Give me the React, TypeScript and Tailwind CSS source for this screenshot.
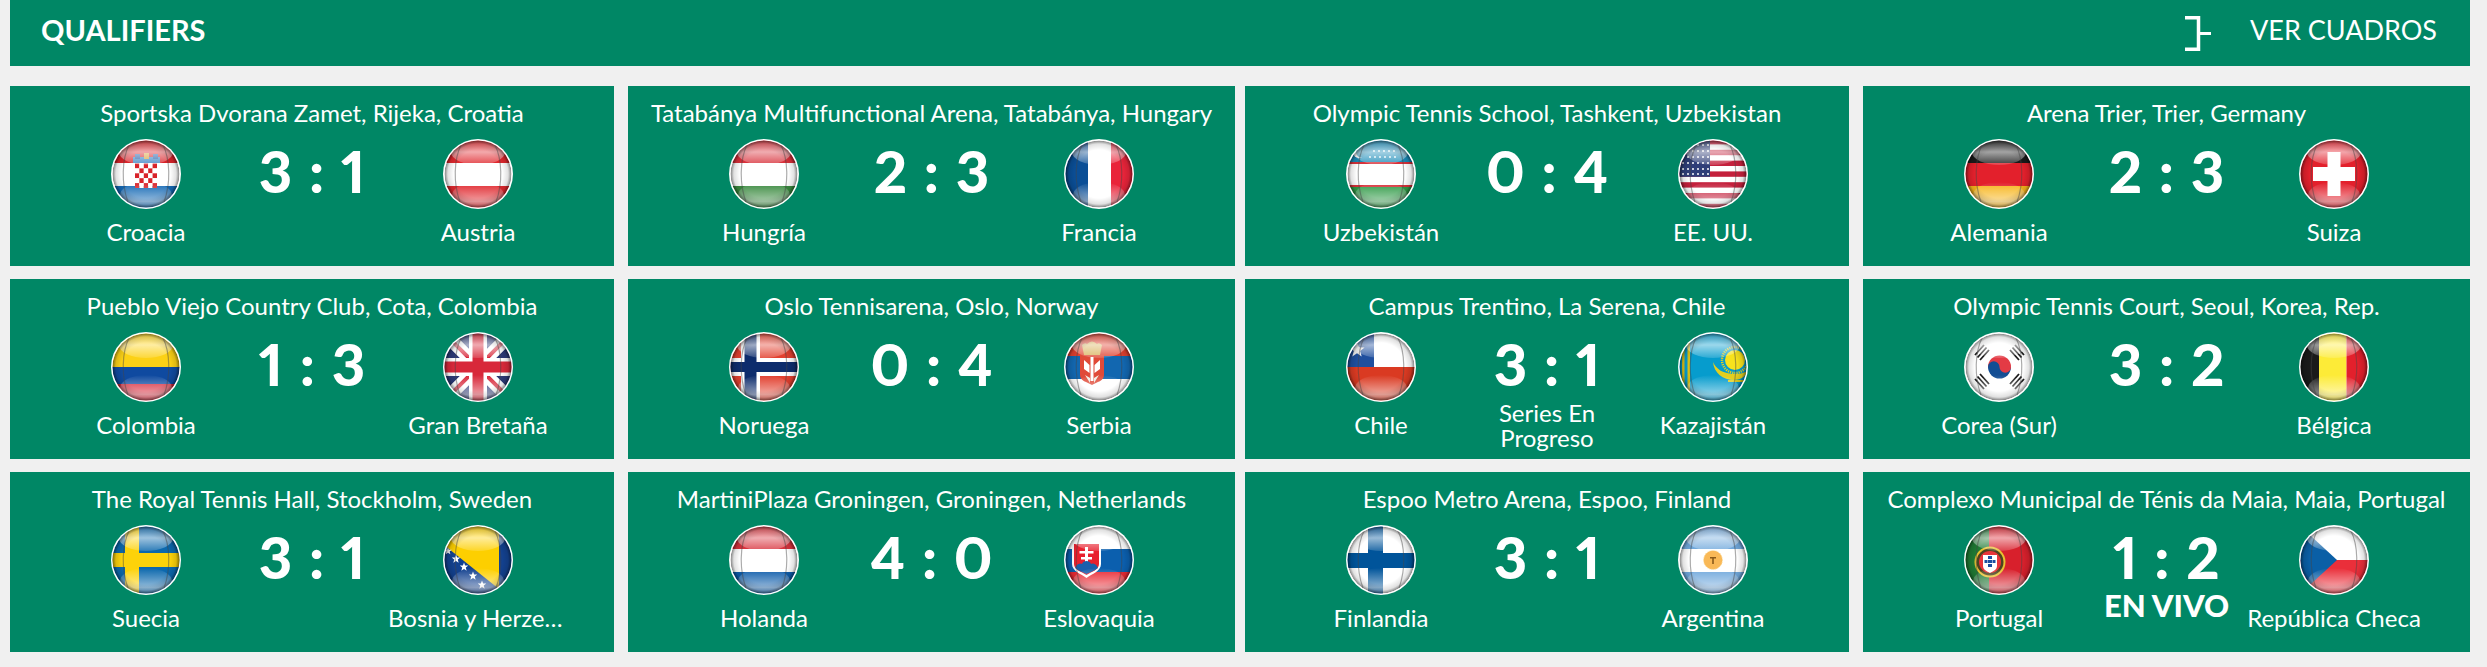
import React from "react";

const R = (x: number, y: number, w: number, h: number, c: string) => <rect x={x} y={y} width={w} height={h} fill={c} />;

function Stars({ pts, r = 1.1, c = "#fff" }: { pts: [number, number][]; r?: number; c?: string }) {
  return <>{pts.map(([x, y], i) => <circle key={i} cx={x} cy={y} r={r} fill={c} />)}</>;
}

function Star5({ x, y, s, c = "#fff" }: { x: number; y: number; s: number; c?: string }) {
  const p: string[] = [];
  for (let i = 0; i < 10; i++) {
    const a = -Math.PI / 2 + (i * Math.PI) / 5;
    const r = i % 2 === 0 ? s : s * 0.42;
    p.push(`${x + r * Math.cos(a)},${y + r * Math.sin(a)}`);
  }
  return <polygon points={p.join(" ")} fill={c} />;
}

const tri = (a: string, b: string, c: string) => (
  <>
    {R(0, 0, 70, 24, a)}
    {R(0, 24, 70, 23, b)}
    {R(0, 47, 70, 23, c)}
  </>
);
const vtri = (a: string, b: string, c: string, p = 24, q = 47) => (
  <>
    {R(0, 0, p, 70, a)}
    {R(p, 0, q - p, 70, b)}
    {R(q, 0, 70 - q, 70, c)}
  </>
);

const checker = () => {
  const cells = [];
  for (let r = 0; r < 5; r++) for (let c = 0; c < 5; c++) {
    cells.push(<rect key={`${r}-${c}`} x={24 + c * 4.4} y={24.5 + r * 4.9} width={4.4} height={4.9} fill={(r + c) % 2 === 0 ? "#d8232a" : "#fff"} />);
  }
  return cells;
};

const FLAGS: Record<string, React.ReactNode> = {
  hr: (
    <>
      {tri("#d8232a", "#ffffff", "#1368b4")}
      {R(22, 18, 27, 6, "#3f86c6")}
      {R(24, 15, 5, 5, "#2a5fa8")}
      {R(33, 14, 5, 6, "#d8a23a")}
      {R(42, 15, 5, 5, "#2a5fa8")}
      {checker()}
    </>
  ),
  at: tri("#e0282e", "#ffffff", "#e0282e"),
  hu: tri("#d8303a", "#ffffff", "#3a8a3f"),
  fr: vtri("#0a4e96", "#ffffff", "#e9243a"),
  uz: (
    <>
      {R(0, 0, 70, 23, "#1a8bb8")}
      {R(0, 23, 70, 2, "#d6313a")}
      {R(0, 25, 70, 21, "#fff")}
      {R(0, 46, 70, 2, "#d6313a")}
      {R(0, 48, 70, 22, "#2f9a46")}
      <circle cx={13} cy={13} r={6} fill="#fff" />
      <circle cx={15.5} cy={13} r={5.5} fill="#1a8bb8" />
      <Stars r={0.9} pts={[[28, 12], [33, 12], [38, 12], [43, 12], [48, 12], [24, 18], [29, 18], [34, 18], [39, 18], [44, 18], [49, 18]]} />
    </>
  ),
  us: (
    <>
      {R(0, 0, 70, 70, "#fff")}
      {[0, 2, 4, 6, 8, 10, 12].map((i) => <rect key={i} x={0} y={i * 5.4} width={70} height={5.4} fill="#c4203c" />)}
      {R(0, 0, 32, 37.8, "#2f3e78")}
      <Stars r={1} pts={[5, 10, 15, 20, 25, 30].flatMap((x) => [6, 12, 18, 24, 30, 35].map((y) => [x, y] as [number, number]))} />
    </>
  ),
  de: tri("#1a1a1a", "#e3202c", "#f7b51c"),
  ch: (
    <>
      {R(0, 0, 70, 70, "#e3202c")}
      {R(14, 28, 42, 14, "#fff")}
      {R(28.5, 13, 13, 44, "#fff")}
    </>
  ),
  co: (
    <>
      {R(0, 0, 70, 35, "#fcd116")}
      {R(0, 35, 70, 17, "#0f4aa0")}
      {R(0, 52, 70, 18, "#d8283a")}
    </>
  ),
  gb: (
    <>
      {R(0, 0, 70, 70, "#2c3a78")}
      <path d="M0 0L70 70M70 0L0 70" stroke="#fff" strokeWidth={13} />
      <path d="M0 0L70 70M70 0L0 70" stroke="#d8283a" strokeWidth={4} />
      {R(26, 0, 18, 70, "#fff")}
      {R(0, 26, 70, 18, "#fff")}
      {R(29.5, 0, 11, 70, "#d8283a")}
      {R(0, 29.5, 70, 11, "#d8283a")}
    </>
  ),
  no: (
    <>
      {R(0, 0, 70, 70, "#e2402f")}
      {R(12, 0, 19, 70, "#fff")}
      {R(0, 26, 70, 18, "#fff")}
      {R(15.5, 0, 12, 70, "#0d2c6c")}
      {R(0, 30, 70, 10, "#0d2c6c")}
    </>
  ),
  rs: (
    <>
      {tri("#e0402f", "#1267b0", "#ffffff")}
      <path d="M18 13q3-3 5-1 5-5 10 0 2-2 5 1l-2 10H20z" fill="#d9b25c" />
      <path d="M16 23h24v20c0 6-7 7-12 10-5-3-12-4-12-10z" fill="#e04a38" />
      <path d="M26.500 25h3v24h-3zM20 28l5.500 5v8l-5.500-4zM36 28l-5.500 5v8l5.500-4z" fill="#fff" />
      <path d="M21 43l5 3v5zM35 43l-5 3v5z" fill="#f1efe6" />
    </>
  ),
  cl: (
    <>
      {R(0, 0, 70, 35, "#fff")}
      {R(0, 35, 70, 35, "#da3a22")}
      {R(0, 0, 28, 35, "#1f4f9e")}
      <Star5 x={11} y={18} s={8} c="#f2f2f2" />
    </>
  ),
  kz: (
    <>
      {R(0, 0, 70, 70, "#069ccd")}
      {R(4, 10, 8, 50, "#d8c21a")}
      {R(6.500, 10, 3, 50, "#069ccd")}
      <circle cx={57} cy={28} r={10} fill="#f7e21c" />
      <circle cx={57} cy={28} r={13} fill="none" stroke="#e4cf1e" strokeWidth={2.5} strokeDasharray="1.2 1" />
      <path d="M35 30c3 7 10 12 22 12 5 0 9-1 13-3-3 6-8 9-14 9-11 0-20-7-21-18z" fill="#e4cf1e" />
      {R(50, 48, 16, 2, "#e4cf1e")}
    </>
  ),
  kr: (
    <>
      {R(0, 0, 70, 70, "#fff")}
      <path d="M24 35a11.500 11.500 0 0 1 23 0z" fill="#e33b45" />
      <path d="M24 35a11.500 11.500 0 0 0 23 0z" fill="#134e94" />
      <path d="M24 35a5.750 5.750 0 0 1 11.500 0z" fill="#134e94" />
      <path d="M35.500 35a5.750 5.750 0 0 0 11.500 0z" fill="#e33b45" />
      <g stroke="#1c1c1c" strokeWidth={1.800}>
        <path d="M11 23l9-10M13.500 25.500l9-10M16 28l9-10" />
        <path d="M46 18l9 10M48.500 15.500l9 10M51 13l9 10" />
        <path d="M11 47l9 10M13.500 44.500l9 10M16 42l9 10" />
        <path d="M46 52l9-10M48.500 54.500l9-10M51 57l9-10" />
      </g>
    </>
  ),
  be: vtri("#1a1a1a", "#fdeb37", "#e3202c", 20, 47.5),
  se: (
    <>
      {R(0, 0, 70, 70, "#0c68ad")}
      {R(14, 0, 14, 70, "#fdd20a")}
      {R(0, 28, 70, 14, "#fdd20a")}
    </>
  ),
  ba: (
    <>
      {R(0, 0, 70, 70, "#13418f")}
      <polygon points="-24,0 56,0 56,64" fill="#fdcf00" />
      <Star5 x={5} y={26} s={4} />
      <Star5 x={13} y={34} s={4.500} />
      <Star5 x={21} y={42} s={4.500} />
      <Star5 x={30} y={51} s={4.500} />
      <Star5 x={39} y={60} s={4.500} />
    </>
  ),
  nl: tri("#d8323c", "#ffffff", "#0d5caa"),
  sk: (
    <>
      {tri("#ffffff", "#0b5fae", "#ea2a34")}
      <path d="M8 17h29v22c0 7-9 10-14.500 14C17 49 8 46 8 39z" fill="#fff" />
      <path d="M10 19h25v20c0 6-8 8-12.500 11C18 47 10 45 10 39z" fill="#e8202e" />
      <path d="M21 22h3v18h-3zM15.500 26h14v2.500h-14zM17 32h11v2.500H17z" fill="#fff" />
      <path d="M11 43c2-5 6-5 7-4 1-4 8-4 9 0 1-1 5-1 7 4-4 3-8 4-11.500 6-3.500-2-7.500-3-11.500-6z" fill="#1a5fac" />
    </>
  ),
  fi: (
    <>
      {R(0, 0, 70, 70, "#fff")}
      {R(22, 0, 15, 70, "#00549a")}
      {R(0, 28, 70, 15, "#00549a")}
    </>
  ),
  ar: (
    <>
      {tri("#70a8dc", "#ffffff", "#70a8dc")}
      <circle cx={35} cy={35} r={9.500} fill="#f9b957" />
      <circle cx={35} cy={35} r={9.500} fill="none" stroke="#fbe0a8" strokeWidth={1} strokeDasharray="1 1" />
      <path d="M32 32h6v1.500h-2.200V39h-1.600v-5.500H32z" fill="#8a5a1a" />
    </>
  ),
  pt: (
    <>
      {R(0, 0, 25, 70, "#1f7a34")}
      {R(25, 0, 45, 70, "#d8202c")}
      <circle cx={26} cy={37} r={15.500} fill="#e8c030" />
      <circle cx={26} cy={37} r={13.500} fill="#1a1a1a" fillOpacity={0.75} />
      <circle cx={26} cy={37} r={11} fill="#e8343a" />
      <path d="M19 30h14v11c0 4-4 5-7 7-3-2-7-3-7-7z" fill="#fff" />
      {R(24, 31, 4, 3, "#1a4fa0")}
      {R(20.500, 35, 3, 3, "#1a4fa0")}
      {R(24, 35, 4, 3, "#1a4fa0")}
      {R(28.500, 35, 3, 3, "#1a4fa0")}
      {R(24, 39, 4, 3, "#1a4fa0")}
    </>
  ),
  cz: (
    <>
      {R(0, 0, 70, 35, "#ffffff")}
      {R(0, 35, 70, 35, "#ea2f3a")}
      <polygon points="0,0 38,35 0,70" fill="#0a5fa6" />
    </>
  ),
};

function Flag({ code }: { code: string }) {
  const clip = `clip-${code}`;
  return (
    <svg viewBox="0 0 70 70" className="w-[70px] h-[70px] block">
      <defs>
        <clipPath id={clip}><circle cx={35} cy={35} r={33.500} /></clipPath>
        <radialGradient id={`rim-${code}`} cx="50%" cy="50%" r="50%">
          <stop offset="0.72" stopColor="#000" stopOpacity={0} />
          <stop offset="0.9" stopColor="#000" stopOpacity={0.12} />
          <stop offset="1" stopColor="#000" stopOpacity={0.5} />
        </radialGradient>
        <linearGradient id={`top-${code}`} x1="0" y1="0" x2="0" y2="1">
          <stop offset="0" stopColor="#fff" stopOpacity={0.1} />
          <stop offset="0.5" stopColor="#fff" stopOpacity={0.6} />
          <stop offset="1" stopColor="#fff" stopOpacity={0.15} />
        </linearGradient>
        <linearGradient id={`bot-${code}`} x1="0" y1="0" x2="0" y2="1">
          <stop offset="0" stopColor="#fff" stopOpacity={0} />
          <stop offset="0.75" stopColor="#fff" stopOpacity={0.55} />
          <stop offset="1" stopColor="#fff" stopOpacity={0.25} />
        </linearGradient>
      </defs>
      <circle cx={35} cy={35} r={35} fill="#fff" />
      <g clipPath={`url(#${clip})`}>
        {FLAGS[code]}
        <ellipse cx={35} cy={13} rx={27} ry={13} fill={`url(#top-${code})`} />
        <ellipse cx={35} cy={56} rx={26} ry={13} fill={`url(#bot-${code})`} />
        <circle cx={35} cy={35} r={33.500} fill={`url(#rim-${code})`} />
        <path d="M18 6C11 20 10 44 17 63M52 6C59 20 60 44 53 63" fill="none" stroke="#444" strokeOpacity={0.45} strokeWidth={1.200} />
      </g>
    </svg>
  );
}

type Match = { venue: string; a: string; af: string; b: string; bf: string; score: [number, number]; status?: string; live?: boolean };

const MATCHES: Match[] = [
  { venue: "Sportska Dvorana Zamet, Rijeka, Croatia", a: "Croacia", af: "hr", b: "Austria", bf: "at", score: [3, 1] },
  { venue: "Tatabánya Multifunctional Arena, Tatabánya, Hungary", a: "Hungría", af: "hu", b: "Francia", bf: "fr", score: [2, 3] },
  { venue: "Olympic Tennis School, Tashkent, Uzbekistan", a: "Uzbekistán", af: "uz", b: "EE. UU.", bf: "us", score: [0, 4] },
  { venue: "Arena Trier, Trier, Germany", a: "Alemania", af: "de", b: "Suiza", bf: "ch", score: [2, 3] },
  { venue: "Pueblo Viejo Country Club, Cota, Colombia", a: "Colombia", af: "co", b: "Gran Bretaña", bf: "gb", score: [1, 3] },
  { venue: "Oslo Tennisarena, Oslo, Norway", a: "Noruega", af: "no", b: "Serbia", bf: "rs", score: [0, 4] },
  { venue: "Campus Trentino, La Serena, Chile", a: "Chile", af: "cl", b: "Kazajistán", bf: "kz", score: [3, 1], status: "Series En Progreso" },
  { venue: "Olympic Tennis Court, Seoul, Korea, Rep.", a: "Corea (Sur)", af: "kr", b: "Bélgica", bf: "be", score: [3, 2] },
  { venue: "The Royal Tennis Hall, Stockholm, Sweden", a: "Suecia", af: "se", b: "Bosnia y Herzegovina", bf: "ba", score: [3, 1] },
  { venue: "MartiniPlaza Groningen, Groningen, Netherlands", a: "Holanda", af: "nl", b: "Eslovaquia", bf: "sk", score: [4, 0] },
  { venue: "Espoo Metro Arena, Espoo, Finland", a: "Finlandia", af: "fi", b: "Argentina", bf: "ar", score: [3, 1] },
  { venue: "Complexo Municipal de Ténis da Maia, Maia, Portugal", a: "Portugal", af: "pt", b: "República Checa", bf: "cz", score: [1, 2], live: true },
];

function Team({ name, flag }: { name: string; flag: string }) {
  return (
    <div className="flex flex-col items-center min-w-0">
      <Flag code={flag} />
      <div className="w-full mt-[9px] h-[28px] leading-[28px] text-center truncate">{name}</div>
    </div>
  );
}

function Card({ m, wide }: { m: Match; wide: boolean }) {
  return (
    <div className={`h-[180px] bg-[#008765] pt-[13px] px-[46px] ${wide ? "w-[607px]" : "w-[604px]"}`}>
      <div className="h-[28px] leading-[28px] text-center whitespace-nowrap -mx-[46px]">{m.venue}</div>
      <div className="grid grid-cols-[180px_1fr_180px] mt-[12px]">
        <Team name={m.a} flag={m.af} />
        <div className="flex flex-col items-center">
          <div className="h-[64px] leading-[64px] text-[58px] font-black whitespace-nowrap proportional-nums [word-spacing:3px]">
            {m.score[0]} : {m.score[1]}
          </div>
          {m.status && <div className="mt-[4px] w-[120px] text-center leading-[25px]">{m.status}</div>}
          {m.live && <div className="text-[31px] leading-[32px] font-black whitespace-nowrap">EN VIVO</div>}
        </div>
        <Team name={m.b} flag={m.bf} />
      </div>
    </div>
  );
}

export default function App() {
  return (
    <div className="w-[2487px] h-[667px] overflow-hidden bg-[#f0f0f0] pl-[10px] pr-[17px] text-white text-[24px] font-['Lato',sans-serif]">
      <div className="h-[66px] bg-[#008765] flex items-center justify-between pl-[31px] pr-[33px] pb-[6px]">
        <div className="text-[29px] font-bold">QUALIFIERS</div>
        <div className="flex items-center">
          <svg viewBox="0 0 26 35" className="w-[26px] h-[35px] mt-[6px]" fill="none" stroke="#fff" strokeWidth={3.500}>
            <path d="M0 1.750H13.500V33.250H0" />
            <path d="M13.500 17.500H26" strokeWidth={3} />
          </svg>
          <div className="ml-[39px] text-[27px]">VER CUADROS</div>
        </div>
      </div>
      <div className="mt-[20px] flex flex-col gap-[13px]">
        {[0, 4, 8].map((s) => (
          <div key={s} className="flex gap-[10px]">
            <div className="flex gap-[14px]">
              <Card m={MATCHES[s]} wide={false} />
              <Card m={MATCHES[s + 1]} wide={true} />
            </div>
            <div className="flex gap-[14px]">
              <Card m={MATCHES[s + 2]} wide={false} />
              <Card m={MATCHES[s + 3]} wide={true} />
            </div>
          </div>
        ))}
      </div>
    </div>
  );
}
